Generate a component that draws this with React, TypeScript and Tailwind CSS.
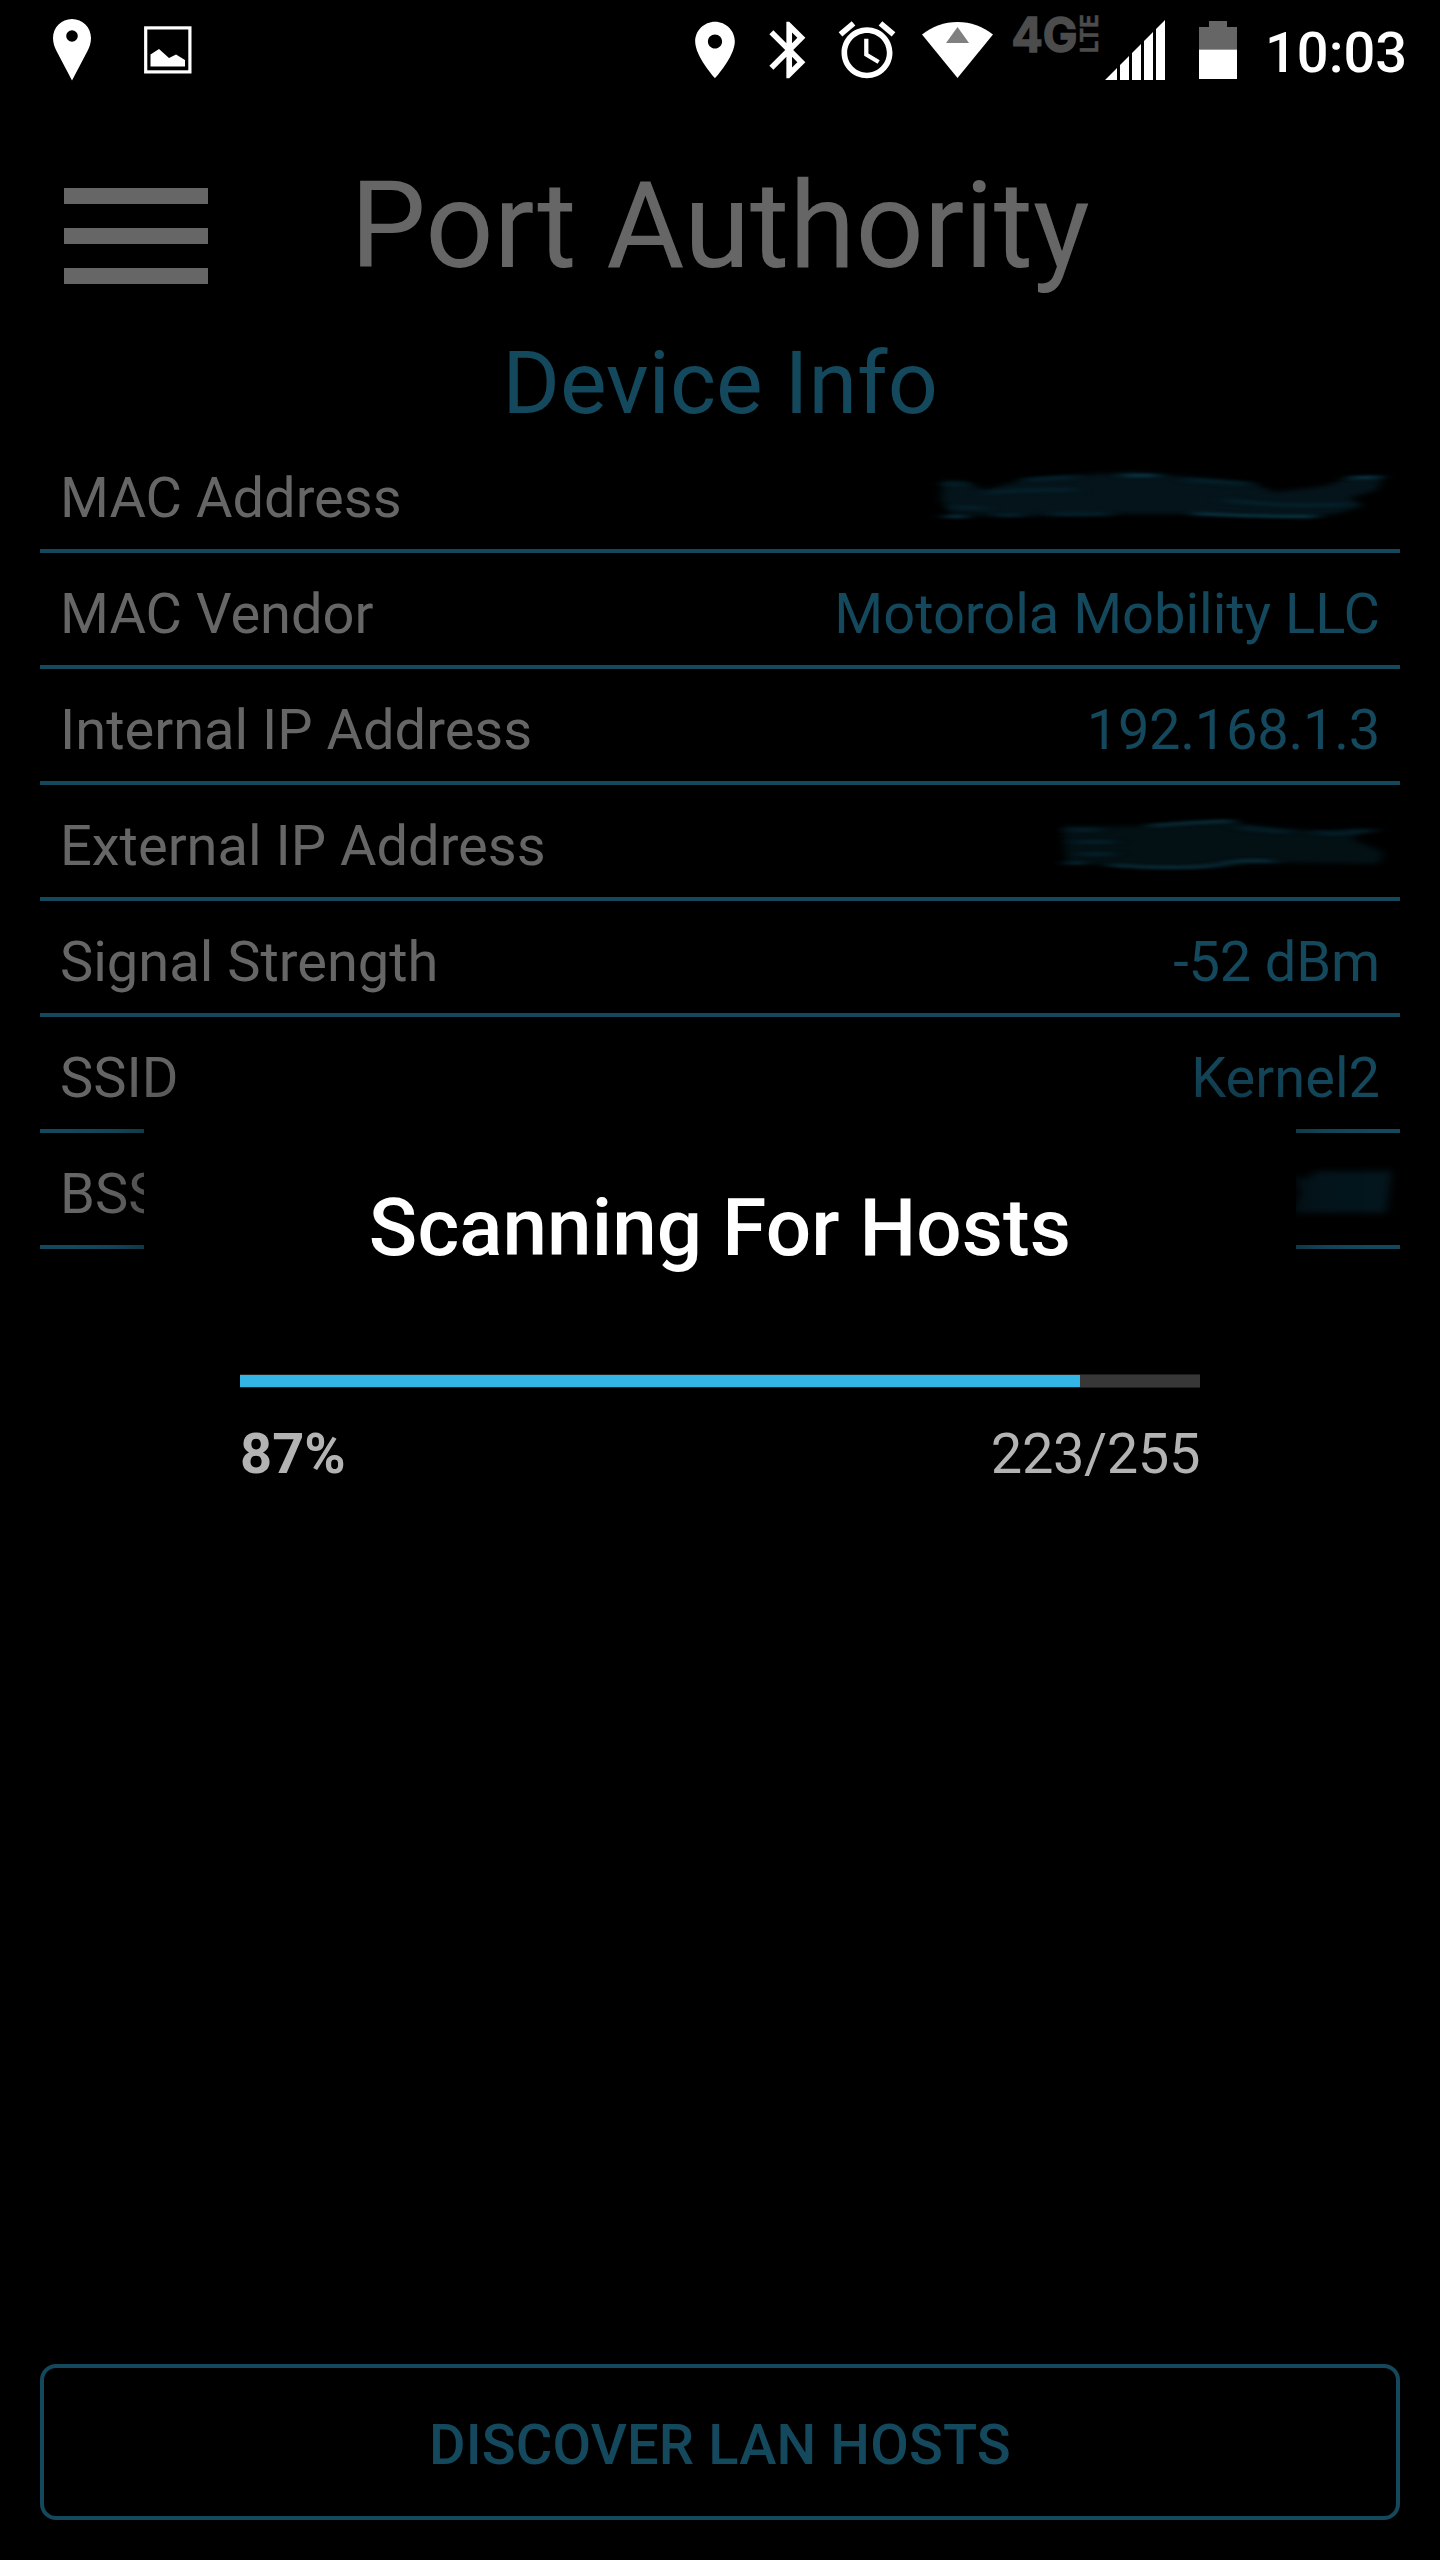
import React from "react";

const MATERIAL_BLUETOOTH =
  "M17.71 7.71L12 2h-1v7.59L6.41 5 5 6.41 10.59 12 5 17.59 6.41 19 11 14.41V22h1l5.71-5.71-4.3-4.29 4.3-4.29zM13 5.83l1.88 1.88L13 9.59V5.83zm1.88 10.46L13 18.17v-3.76l1.88 1.88z";
const MATERIAL_ALARM =
  "M22 5.72l-4.6-3.86-1.29 1.53 4.6 3.86L22 5.72zM7.88 3.39L6.6 1.86 2 5.71l1.29 1.53 4.59-3.85zM12.5 8H11v6l4.75 2.85.75-1.23-4-2.37V8zM12 4c-4.97 0-9 4.03-9 9s4.02 9 9 9c4.97 0 9-4.03 9-9s-4.03-9-9-9zm0 16c-3.87 0-7-3.13-7-7s3.13-7 7-7 7 3.13 7 7-3.13 7-7 7z";
const MATERIAL_PLACE =
  "M12 2C8.13 2 5 5.13 5 9c0 5.25 7 13 7 13s7-7.75 7-13c0-3.87-3.13-7-7-7zm0 9.5c-1.38 0-2.5-1.12-2.5-2.5s1.12-2.5 2.5-2.5 2.5 1.12 2.5 2.5-1.12 2.5-2.5 2.5z";

function StatusBar() {
  return (
    <header className="flex h-24 w-full shrink-0 justify-between pl-[53px] pr-8">
      <div className="flex gap-[53px]">
        <svg className="h-24 w-[38px]" viewBox="53 0 38 96" fill="#fff">
          <path
            fillRule="evenodd"
            d="M72 19C61.500 19 53 27.500 53 38C53 43 54.500 47 56.500 51L72 80.500L87.500 51C89.500 47 91 43 91 38C91 27.500 82.500 19 72 19ZM72 30.200a5.800 5.800 0 1 1 0 11.600a5.800 5.800 0 0 1 0-11.600Z"
          />
        </svg>
        <svg className="h-24 w-12" viewBox="144 0 48 96">
          <rect x="145.700" y="27.900" width="44.200" height="44" fill="none" stroke="#fff" strokeWidth="3.200" />
          <path fill="#fff" d="M150.500 54.500L159 49L169 58L176 54.500L185 60V66.600H150.500Z" />
        </svg>
      </div>
      <div className="flex">
        <svg className="h-24 w-[317px]" viewBox="692 0 317 96" fill="#fff">
          <path transform="translate(681 16) scale(2.8333)" d={MATERIAL_PLACE} />
          <path transform="translate(755.2 16) scale(2.8333)" d={MATERIAL_BLUETOOTH} />
          <path transform="translate(833 16) scale(2.8333)" d={MATERIAL_ALARM} />
          <path d="M957.500 78L922 34.500C932 26.500 944.500 22 957.500 22S983 26.500 993 34.500Z" />
          <path fill="#808080" d="M957.500 27L969 43H946Z" />
        </svg>
        <svg className="h-24 w-[94px]" viewBox="1009 0 94 96" fill="#4c4c4c" stroke="#4c4c4c">
          <text
            x="1011.500"
            y="51.500"
            fontFamily="Inter, sans-serif"
            fontWeight="700"
            fontSize="48"
            strokeWidth="1.500"
            textLength="66"
            lengthAdjust="spacingAndGlyphs"
          >
            4G
          </text>
          <text
            transform="translate(1098 53) rotate(-90)"
            fontFamily="Inter, sans-serif"
            fontWeight="700"
            fontSize="24"
            strokeWidth="0.500"
            textLength="38.500"
            lengthAdjust="spacingAndGlyphs"
          >
            LTE
          </text>
        </svg>
        <svg className="h-24 w-[164px]" viewBox="1103 0 164 96" fill="#fff">
          <path d="M1105 80L1117 68V80ZM1120 65L1129 56V80H1120ZM1132 53L1141 44V80H1132ZM1144 41L1153 32V80H1144ZM1156 29L1165 20V80H1156Z" />
          <path fill="#666" d="M1199 49.500V27H1209V21H1227V27H1237V49.500Z" />
          <path d="M1199 49.500H1237V79H1199Z" />
        </svg>
        <span className="mt-5 h-[66px] w-[141px] -indent-[2px] text-[56px] leading-[66px] font-medium whitespace-nowrap text-white">
          10:03
        </span>
      </div>
    </header>
  );
}

function SoftFilter({ id, blur }: { id: string; blur: string }) {
  return (
    <filter id={id} x="-10%" y="-30%" width="120%" height="160%" colorInterpolationFilters="sRGB">
      <feGaussianBlur stdDeviation={blur} />
    </filter>
  );
}

/** Brushed-out value: soft strokes laid over a faint fill. */
function Smudge({ kind }: { kind: "long" | "medium" | "short" }) {
  if (kind === "long") {
    return (
      <svg className="mt-[5px] -mr-[35px] h-20 w-[490px]" viewBox="0 0 490 80" fill="none">
        <SoftFilter id="long-fill" blur="5 2.2" />
        <SoftFilter id="long-line" blur="8 1.6" />
        <path
          filter="url(#long-fill)"
          fill="#04141a"
          d="M18 20L42 22L60 30L100 19L150 15L210 12L290 19L330 24L350 32L400 26L425 17L458 17L452 30L425 38L440 46L410 54L390 57L300 54L200 54L100 56L25 54L16 40Z"
        />
        <g filter="url(#long-line)" stroke="#05202b" strokeWidth="4">
          <path stroke="#0b3a4b" strokeWidth="3" d="M20 56.500H42M425 18L455 17M268 53.500Q330 57 390 56.500M198 15.500H232" />
          <path d="M20 24H40M100 20L150 17M262 20L325 24M68 55H98M125 54H185M28 47L60 48M60 33Q100 29 150 30M300 40Q370 48 425 44" />
        </g>
      </svg>
    );
  }
  if (kind === "medium") {
    return (
      <svg className="mt-[5px] -mr-6 h-20 w-[350px]" viewBox="0 0 350 80" fill="none">
        <SoftFilter id="medium-fill" blur="5 2.2" />
        <SoftFilter id="medium-line" blur="8 1.6" />
        <path
          filter="url(#medium-fill)"
          fill="#031014"
          d="M8 18L80 18L170 12L190 16L230 20L270 23L310 20L300 32L330 44L325 56L220 55L110 61L12 54Z"
        />
        <g filter="url(#medium-line)" stroke="#051f29" strokeWidth="4">
          <path stroke="#0b303e" strokeWidth="3" d="M12 55H30M55 57Q130 62 165 57Q190 50 220 54M95 18Q140 14 180 13" />
          <path d="M14 22H45M185 19Q210 23 235 24M260 24L280 26L320 22M20 34H60M25 46H60" />
        </g>
      </svg>
    );
  }
  return (
    <svg className="mt-[5px] -mr-[30px] h-20 w-[130px]" viewBox="0 0 130 80" fill="none">
      <SoftFilter id="short-fill" blur="5 3" />
      <path filter="url(#short-fill)" fill="#04161d" d="M12 18L24 24L36 15H112L106 57H12L20 36Z" />
    </svg>
  );
}

const rows: { label: string; value: React.ReactNode }[] = [
  { label: "MAC Address", value: <Smudge kind="long" /> },
  { label: "MAC Vendor", value: "Motorola Mobility LLC" },
  { label: "Internal IP Address", value: <span className="tracking-[-0.25px]">192.168.1.3</span> },
  { label: "External IP Address", value: <Smudge kind="medium" /> },
  { label: "Signal Strength", value: <span className="tracking-[-0.15px]">-52 dBm</span> },
  { label: "SSID", value: "Kernel2" },
  { label: "BSSID", value: <Smudge kind="short" /> },
];

function ScanDialog() {
  const done = 223;
  const total = 255;
  return (
    <section className="absolute top-[1105px] left-36 flex h-[463px] w-[1152px] flex-col bg-black px-24 pt-[76px] shadow-[0_0_56px_rgba(0,0,0,0.45)]">
      <h3 className="text-center text-[80px] leading-[94px] font-medium tracking-[0.1px] text-white">Scanning For Hosts</h3>
      <div className="mt-[99px] h-3.5 border-y border-[#1f1f1f] bg-[#373737]">
        <div className="h-full bg-[#33b5e5]" style={{ width: `${(done / total) * 100}%` }} />
      </div>
      <div className="mt-[33px] flex justify-between text-[56px] leading-[66px] text-[#b3b3b3]">
        <span className="font-bold">{Math.floor((done / total) * 100)}%</span>
        <span className="tracking-[-0.4px]">
          {done}/{total}
        </span>
      </div>
    </section>
  );
}

export default function App() {
  return (
    <div className="relative flex h-[2560px] w-[1440px] flex-col overflow-hidden bg-black font-['Roboto',sans-serif] text-[#666]">
      <StatusBar />
      <div className="grid h-[229px] grid-cols-[272px_1fr_272px] items-start">
        <div className="mt-[92px] ml-16 flex w-36 flex-col gap-6">
          <div className="h-4 bg-[#666]" />
          <div className="h-4 bg-[#666]" />
          <div className="h-4 bg-[#666]" />
        </div>
        <h1 className="mt-[60px] text-center text-[120px] leading-[141px] whitespace-nowrap">Port Authority</h1>
      </div>
      <h2 className="h-[112px] pt-0.5 text-center text-[88px] leading-[112px] text-[#14485c]">Device Info</h2>
      <ul className="mx-10 flex flex-col">
        {rows.map((row) => (
          <li
            key={row.label}
            className="flex h-[116px] items-center justify-between border-b-4 border-[#14485c] px-5 pt-[9px] text-[56px] leading-[66px]"
          >
            <span>{row.label}</span>
            <span className="text-[#14485c]">{row.value}</span>
          </li>
        ))}
      </ul>
      <button className="mx-10 mt-auto mb-10 flex h-[156px] shrink-0 items-center justify-center rounded-2xl border-4 border-[#14485c] pt-[5px] text-[56px] font-medium tracking-[0.15px] text-[#14485c]">
        DISCOVER LAN HOSTS
      </button>
      <ScanDialog />
    </div>
  );
}
